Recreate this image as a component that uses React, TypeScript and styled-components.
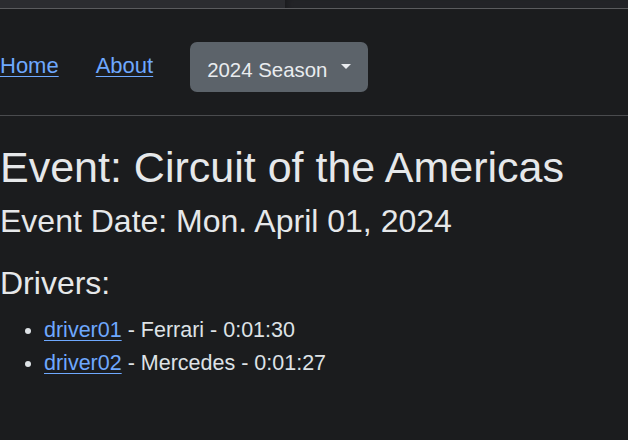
import React from "react";
import styled, { createGlobalStyle } from "styled-components";

const FONT = `"Liberation Sans", Arial, sans-serif`;

const Global = createGlobalStyle`
  html, body { margin: 0; padding: 0; background: #1b1c1e; }
  body { font-family: ${FONT}; color: #dee2e6; }
  * { box-sizing: border-box; }
`;

const TopStrip = styled.div`
  display: flex;
  height: 9px;
  border-bottom: 1px solid #5a5b5e;
`;

const StripPart = styled.div<{ $dark?: boolean }>`
  flex: ${(p) => (p.$dark ? "1 1 auto" : "0 0 285px")};
  background: ${(p) => (p.$dark ? "#232428" : "#2b2c30")};
  box-shadow: ${(p) => (p.$dark ? "inset 6px 0 6px -4px #18191b" : "none")};
`;

const Nav = styled.nav`
  display: flex;
  align-items: center;
  gap: 37px;
  height: 107px;
  padding-top: 10px;
  border-bottom: 1px solid #4a4b4e;
`;

const NavLink = styled.a`
  font-size: 22px;
  line-height: 33px;
  color: #6ea8fe;
  text-decoration: underline;
  text-underline-offset: 3px;
  text-decoration-thickness: 1px;
  margin-bottom: 3px;
`;

const SeasonButton = styled.button`
  display: flex;
  align-items: center;
  gap: 14px;
  height: 50px;
  padding: 0 17px;
  border: none;
  border-radius: 7px;
  background: #5c636a;
  color: #e9ecef;
  font-family: ${FONT};
  cursor: pointer;
`;

const ButtonLabel = styled.span`
  font-size: 20.4px;
  line-height: 20.4px;
  margin-top: 6px;
`;

const Caret = styled.span`
  width: 0;
  height: 0;
  border-left: 5px solid transparent;
  border-right: 5px solid transparent;
  border-top: 5px solid #e9ecef;
  margin-top: -1px;
`;

const Main = styled.main`
  padding-top: 24px;
`;

const Title = styled.h1`
  margin: 0;
  font-size: 43px;
  line-height: 54px;
  font-weight: 400;
  color: #e6e8ea;
`;

const SubTitle = styled.h2<{ $gap: number }>`
  margin: ${(p) => p.$gap}px 0 0;
  font-size: 32px;
  line-height: 40px;
  font-weight: 400;
  color: #e6e8ea;
`;

const DriverList = styled.ul`
  margin: 11px 0 0;
  padding-left: 44px;
`;

const DriverItem = styled.li`
  font-size: 21.5px;
  line-height: 32.5px;
`;

const DriverLink = styled.a`
  color: #6ea8fe;
  text-decoration: underline;
  text-underline-offset: 3px;
  text-decoration-thickness: 1px;
`;

const drivers = [
  { id: "driver01", team: "Ferrari", time: "0:01:30" },
  { id: "driver02", team: "Mercedes", time: "0:01:27" },
];

export default function App() {
  return (
    <>
      <Global />
      <TopStrip>
        <StripPart />
        <StripPart $dark />
      </TopStrip>
      <Nav>
        <NavLink href="#">Home</NavLink>
        <NavLink href="#">About</NavLink>
        <SeasonButton type="button">
          <ButtonLabel>2024 Season</ButtonLabel>
          <Caret />
        </SeasonButton>
      </Nav>
      <Main>
        <Title>Event: Circuit of the Americas</Title>
        <SubTitle $gap={7}>Event Date: Mon. April 01, 2024</SubTitle>
        <SubTitle $gap={22}>Drivers:</SubTitle>
        <DriverList>
          {drivers.map((d) => (
            <DriverItem key={d.id}>
              <DriverLink href="#">{d.id}</DriverLink> - {d.team} - {d.time}
            </DriverItem>
          ))}
        </DriverList>
      </Main>
    </>
  );
}
